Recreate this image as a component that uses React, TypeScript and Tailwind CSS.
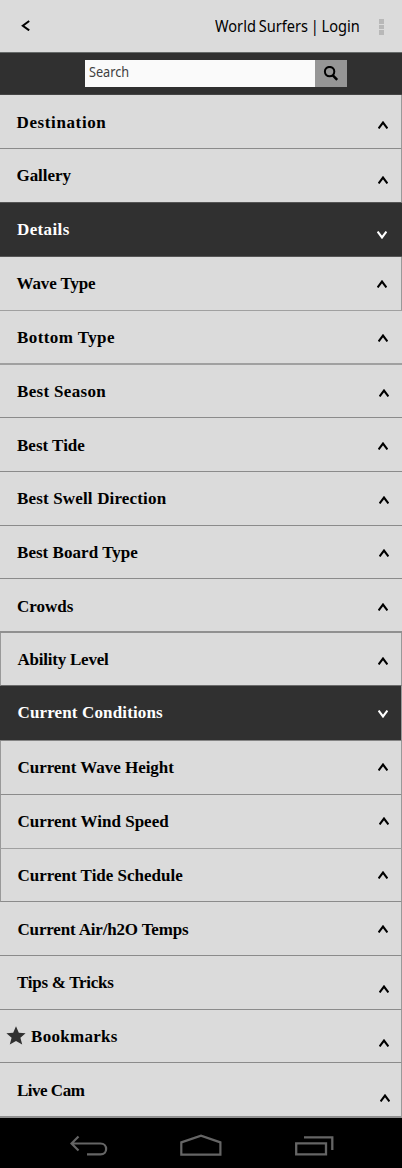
type Row = {
  label: string;
  row: string;
  text: string;
  icon: string;
  active?: boolean;
  star?: boolean;
};

const rows: Row[] = [
  { label: "Destination", row: "h-[54px] border-b border-r border-b-[#8b8b8b] pr-[13px]", text: "pl-[16.5px] pt-[17px] tracking-[0.62px]", icon: "mt-[26px]" },
  { label: "Gallery", row: "h-[54px] border-b border-r border-b-[#555555] pr-[13px]", text: "pl-[16.5px] pt-[16px] tracking-[-0.05px]", icon: "mt-[27px]" },
  { label: "Details", active: true, row: "h-[54px] border-b border-b-[#555555] pr-[15px]", text: "pl-[17px] pt-[16px] tracking-[0.38px]", icon: "mt-[28px]" },
  { label: "Wave Type", row: "h-[54px] border-b border-r border-b-[#a0a0a0] pr-[14px]", text: "pl-[16.5px] pt-[16px] tracking-[-0.12px]", icon: "mt-[22.5px]" },
  { label: "Bottom Type", row: "h-[54px] border-b-2 border-b-[#a0a0a0] pr-[14.5px]", text: "pl-[17px] pt-[16px] tracking-[0.42px]", icon: "mt-[23px]" },
  { label: "Best Season", row: "h-[53px] border-b border-b-[#8b8b8b] pr-[13.5px]", text: "pl-[17px] pt-[16px] tracking-[0.33px]", icon: "mt-[24px]" },
  { label: "Best Tide", row: "h-[54px] border-b border-b-[#8b8b8b] pr-[14px]", text: "pl-[17px] pt-[17px]", icon: "mt-[24px]" },
  { label: "Best Swell Direction", row: "h-[54px] border-b border-b-[#8b8b8b] pr-[13.5px]", text: "pl-[17px] pt-[16px] tracking-[0.16px]", icon: "mt-[24px]" },
  { label: "Best Board Type", row: "h-[53px] border-b border-b-[#8b8b8b] pr-[13.5px]", text: "pl-[17px] pt-[16px] tracking-[0.04px]", icon: "mt-[23px]" },
  { label: "Crowds", row: "h-[54px] border-b-2 border-b-[#909090] pr-[14px]", text: "pl-[17px] pt-[17px]", icon: "mt-[24px]" },
  { label: "Ability Level", row: "h-[53px] border-x border-b border-b-[#6b6b6b] pr-[13px]", text: "pl-[16.5px] pt-[16px] tracking-[-0.23px]", icon: "mt-[24px]" },
  { label: "Current Conditions", active: true, row: "h-[55px] border-b border-r border-b-[#858585] pr-[13px]", text: "pl-[17.5px] pt-[16px] tracking-[0.14px]", icon: "mt-[24px]" },
  { label: "Current Wave Height", row: "h-[54px] border-x border-b border-b-[#8b8b8b] pr-[13px]", text: "pl-[16.5px] pt-[16px] tracking-[-0.04px]", icon: "mt-[22px]" },
  { label: "Current Wind Speed", row: "h-[54px] border-x border-b border-b-[#a0a0a0] pr-[12px]", text: "pl-[16.5px] pt-[16px]", icon: "mt-[22px]" },
  { label: "Current Tide Schedule", row: "h-[53px] border-x border-b border-b-[#8b8b8b] pr-[13px]", text: "pl-[16.5px] pt-[16px]", icon: "mt-[22px]" },
  { label: "Current Air/h2O Temps", row: "h-[54px] border-b border-r border-b-[#8b8b8b] pr-[13px]", text: "pl-[17.5px] pt-[17px] tracking-[-0.17px]", icon: "mt-[23px]" },
  { label: "Tips & Tricks", row: "h-[54px] border-b border-r border-b-[#8b8b8b] pr-[12px]", text: "pl-[17px] pt-[16px] tracking-[-0.27px]", icon: "mt-[29px]" },
  { label: "Bookmarks", star: true, row: "h-[53px] border-b border-r border-b-[#8b8b8b] pr-[12px]", text: "pl-[5px] pt-[16px] tracking-[0.3px]", icon: "mt-[29px]" },
  { label: "Live Cam", row: "h-[55px] border-b-2 border-r border-b-[#909090] pr-[11.5px]", text: "pl-[17px] pt-[17px] tracking-[-0.5px]", icon: "mt-[30.5px]" },
];

function Chevron({ down, className }: { down?: boolean; className: string }) {
  return (
    <svg width="10" height="8" viewBox="0 0 10 8" fill="none" stroke="currentColor" strokeWidth="2.1" className={className}>
      <path d={down ? "M0.6 0.6L5 6.5L9.4 0.6" : "M0.6 7.4L5 1.5L9.4 7.4"} />
    </svg>
  );
}

function Item({ item }: { item: Row }) {
  return (
    <li className={`flex items-start border-x-[#999999] ${item.active ? "bg-[#303030] text-white" : "bg-[#dbdbdb] text-black"} ${item.row}`}>
      {item.star && (
        <svg width="20" height="19" viewBox="0 0 20 19" fill="#303030" className="ml-[6px] mt-[16px]">
          <path d="M10 0.3L12.8 6.7L19.6 7.2L14.4 11.7L16.2 18.4L10 15L3.8 18.4L5.6 11.7L0.4 7.2L7.2 6.7Z" />
        </svg>
      )}
      <span className={`flex-1 whitespace-nowrap text-[17px] leading-[22px] font-bold ${item.text}`}>{item.label}</span>
      <Chevron down={item.active} className={item.icon} />
    </li>
  );
}

export default function App() {
  return (
    <div className="flex h-[1168px] w-[402px] flex-col overflow-hidden bg-[#dbdbdb]">
      <header className="flex h-[53px] shrink-0 items-start border-b border-[#666a69] font-['Noto_Sans',sans-serif] text-black">
        <svg width="9" height="11" viewBox="0 0 9 11" fill="none" stroke="currentColor" strokeWidth="2" className="ml-[21px] mt-[20px]">
          <path d="M8.2 1L1.8 5.8L8.2 10.4" />
        </svg>
        <div className="ml-auto mr-[20px] mt-[15px] w-[144px]">
          <span className="block w-max origin-left scale-x-[0.885] whitespace-nowrap text-[16.5px] leading-[22px] [word-spacing:-1.2px]">World Surfers | Login</span>
        </div>
        <div className="mr-[18px] mt-[19px] flex flex-col gap-px">
          <span className="h-[4.5px] w-[5px] bg-[#b8b8b8]" />
          <span className="h-[4.5px] w-[5px] bg-[#b8b8b8]" />
          <span className="h-[4.5px] w-[5px] bg-[#b8b8b8]" />
        </div>
      </header>
      <div className="flex h-[42px] shrink-0 items-start border-b border-[#444444] bg-[#303030] pl-[85px] pt-[7px] font-['Noto_Sans',sans-serif]">
        <div className="h-[27px] w-[230px] bg-[#fafafa] pl-[4px] text-[13.5px] leading-[25px] text-[#404040]">
          <span className="block w-max origin-left scale-x-[0.94]">Search</span>
        </div>
        <div className="flex h-[27px] w-[32px] justify-center bg-[#969696] pt-[6px]">
          <svg width="16" height="16" viewBox="0 0 16 16" fill="none" stroke="#000" className="mr-px">
            <circle cx="6.6" cy="5.6" r="4.7" strokeWidth="2" />
            <path d="M9.6 9.2L14.2 13.8" strokeWidth="2.6" />
          </svg>
        </div>
      </div>
      <ul className="flex flex-col font-['Liberation_Serif',serif]">
        {rows.map((item) => (
          <Item key={item.label} item={item} />
        ))}
      </ul>
      <nav className="flex h-[50px] shrink-0 items-start bg-black text-[#656565]">
        <svg width="38" height="21" viewBox="0 0 38 21" fill="none" stroke="currentColor" strokeWidth="2.2" className="ml-[70px] mt-[17px]">
          <path d="M8.5 1.5L1.5 8.5L8.5 15.5M1.5 8.5H30.5C38 8.5 38 19.4 30.5 19.4H17" />
        </svg>
        <svg width="42" height="22" viewBox="0 0 42 22" fill="none" stroke="currentColor" strokeWidth="2.2" className="ml-[72px] mt-[16px]">
          <path d="M1.3 20.7V8.4L21 1.7L40.4 8.4V20.7Z" />
        </svg>
        <svg width="39" height="21" viewBox="0 0 39 21" fill="none" stroke="currentColor" strokeWidth="2.3" className="ml-[73px] mt-[17px]">
          <path d="M1.2 8.4H31V19.4H1.2ZM9 2.4H37.3V15" />
        </svg>
      </nav>
    </div>
  );
}
